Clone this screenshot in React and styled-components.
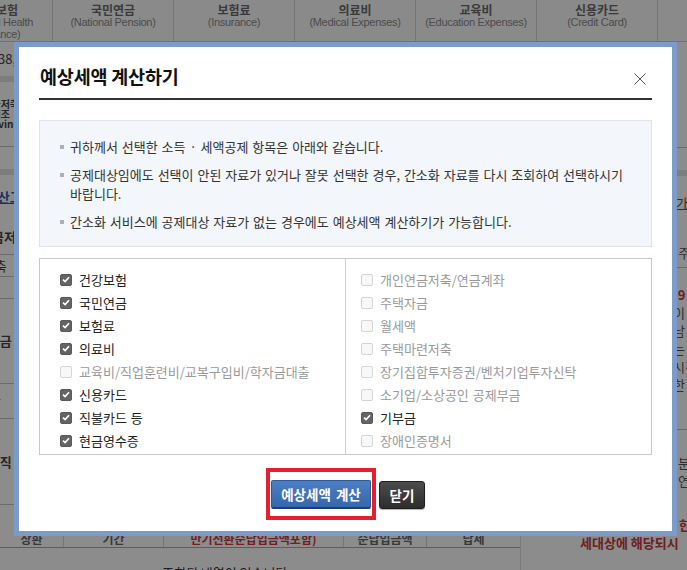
import styled, { createGlobalStyle } from "styled-components";

const GlobalStyle = createGlobalStyle`
  html, body {
    margin: 0;
    padding: 0;
    background: #fff;
  }
  body {
    font-family: "Noto Sans CJK KR", "Noto Sans", sans-serif;
  }
`;

const Screen = styled.div`
  position: relative;
  width: 687px;
  height: 570px;
  overflow: hidden;
`;

/* ---------- page behind the dialog ---------- */

const Page = styled.div`
  display: flex;
  flex-direction: column;
  width: 687px;
  height: 570px;
  overflow: hidden;
  color: #444;
  font-size: 12px;
`;

const HeaderRow = styled.div`
  display: flex;
  flex-shrink: 0;
  height: 42px;
  margin-left: -60px;
  background: #fbfcfe;
  border-bottom: 1px solid #d0d0d0;
  box-sizing: border-box;
`;

const HeaderCell = styled.div`
  flex: 0 0 ${({ $w }) => $w || 121}px;
  box-sizing: border-box;
  border-right: 1px solid #d3d3d3;
  display: flex;
  flex-direction: column;
  align-items: center;
  padding-top: 4px;
  line-height: 12px;
  white-space: nowrap;
  strong {
    font-size: 12px;
    font-weight: 700;
    color: #6a6a6a;
  }
  span {
    font-family: "Liberation Sans", Arial, sans-serif;
    font-size: 11px;
    letter-spacing: -0.3px;
    color: #8a8a8a;
  }
`;

const Main = styled.div`
  flex: 1;
  display: grid;
  grid-template-columns: 521px 1fr;
  min-height: 0;
`;

const LeftCol = styled.div`
  display: flex;
  flex-direction: column;
  overflow: hidden;
  border-right: 1px solid #ddd;
`;

const SideList = styled.div`
  flex: 0 0 462px;
  display: flex;
  flex-direction: column;
  margin-left: -20px;
  overflow: hidden;
`;

const SideRow = styled.div`
  flex: 0 0 ${({ $h }) => $h}px;
  display: flex;
  flex-direction: column;
  justify-content: center;
  box-sizing: border-box;
  background: ${({ $band }) => ($band ? "#e3e3e3" : "transparent")};
  border-bottom: ${({ $line }) => ($line ? "1px solid #c4c4c4" : "none")};
  font-size: ${({ $small }) => ($small ? "10px" : "13px")};
  line-height: ${({ $small }) => ($small ? "10px" : "16px")};
  font-weight: ${({ $bold }) => ($bold ? 700 : 400)};
  color: ${({ $link }) => ($link ? "#2f5a9c" : "#444")};
  text-decoration: ${({ $link }) => ($link ? "underline" : "none")};
  white-space: nowrap;
`;

const BottomTable = styled.div`
  flex: 0 0 44px;
  display: grid;
  grid-template-columns: 64px 100px 180px 83px 94px;
  border-top: 1px solid #c4c4c4;
  border-bottom: 1px solid #aaa;
  box-sizing: border-box;
`;

const BottomHead = styled.div`
  display: flex;
  flex-direction: column;
  justify-content: flex-end;
  align-items: center;
  padding-bottom: 1px;
  border-right: 1px solid #d6d6d6;
  font-size: 12px;
  line-height: 14px;
  font-weight: 700;
  white-space: nowrap;
  color: ${({ $red }) => ($red ? "#c83a3a" : "#666")};
`;

const EmptyRow = styled.div`
  padding-top: 16px;
  padding-left: 162px;
  font-size: 13px;
  line-height: 18px;
  color: #333;
  white-space: nowrap;
`;

const RightCol = styled.div`
  display: flex;
  flex-direction: column;
  overflow: hidden;
  font-size: 13px;
  line-height: 18px;
  white-space: nowrap;
`;

const NoteBlock = styled.div`
  flex: 0 0 ${({ $h }) => $h}px;
  box-sizing: border-box;
  padding-left: ${({ $pad }) => $pad ?? 150}px;
  padding-top: ${({ $top }) => $top || 0}px;
  background: ${({ $band }) => ($band ? "#e3e3e3" : "transparent")};
  border-bottom: ${({ $line }) => ($line ? "1px solid #c4c4c4" : "none")};
  color: ${({ $red }) => ($red ? "#c83a3a" : "#555")};
  font-weight: ${({ $bold }) => ($bold ? 700 : 400)};
  text-decoration: ${({ $link }) => ($link ? "underline" : "none")};
`;

const RedText = styled.span`
  color: #c83a3a;
  font-weight: 700;
`;

const Overlay = styled.div`
  position: absolute;
  inset: 0;
  background: rgba(0, 0, 0, 0.45);
`;

/* ---------- dialog ---------- */

const Modal = styled.div`
  position: absolute;
  left: 14px;
  top: 42px;
  width: 663px;
  height: 494px;
  box-sizing: border-box;
  border: 5px solid #7b9bcb;
  background: #fff;
  padding: 0 20px;
  display: flex;
  flex-direction: column;
  font-family: "Noto Sans CJK KR", "Noto Sans", sans-serif;
`;

const DialogHeader = styled.div`
  display: flex;
  justify-content: space-between;
  align-items: flex-start;
  padding: 17px 0 10px 1px;
  border-bottom: 2px solid #333;
`;

const Title = styled.h2`
  margin: 0;
  font-size: 18.5px;
  line-height: 24px;
  font-weight: 700;
  color: #111;
  letter-spacing: -0.2px;
`;

const CloseButton = styled.button`
  width: 12px;
  height: 12px;
  margin: 9px 6px 0 0;
  padding: 0;
  border: 0;
  background: none;
  cursor: pointer;
  display: flex;
  svg {
    display: block;
  }
`;

const InfoBox = styled.ul`
  list-style: none;
  margin: 20px 0 0;
  padding: 16px 20px 15px;
  background: #f3f6fa;
  border: 1px solid #dfe4ec;
  display: flex;
  flex-direction: column;
  gap: 9px;
`;

const InfoItem = styled.li`
  display: flex;
  gap: 6px;
  font-size: 13px;
  line-height: 19px;
  color: #333;
  word-spacing: 1px;
  white-space: nowrap;
  &::before {
    content: "";
    flex: 0 0 4px;
    height: 4px;
    margin-top: 8px;
    background: #aab0b8;
  }
`;

const CheckPanel = styled.div`
  margin-top: 11px;
  display: grid;
  grid-template-columns: 305px 1fr;
  border: 1px solid #c9c9c9;
`;

const CheckColumn = styled.div`
  display: flex;
  flex-direction: column;
  padding: 9px 0 2px ${({ $pad }) => $pad}px;
  border-left: ${({ $divider }) => ($divider ? "1px solid #d0d0d0" : "none")};
`;

const CheckRow = styled.label`
  display: flex;
  align-items: center;
  gap: 7px;
  height: 23px;
  font-size: 13px;
  color: ${({ $off }) => ($off ? "#9a9a9a" : "#222")};
  word-spacing: 1px;
  white-space: nowrap;
`;

const Box = styled.span`
  flex: 0 0 12px;
  width: 12px;
  height: 12px;
  box-sizing: border-box;
  border-radius: 2px;
  display: flex;
  align-items: center;
  justify-content: center;
  background: ${({ $on }) => ($on ? "#646464" : "#f8f8f8")};
  border: 1px solid ${({ $on }) => ($on ? "#5a5a5a" : "#d6d6d6")};
`;

const Actions = styled.div`
  margin-top: 13px;
  display: flex;
  justify-content: center;
  align-items: center;
  gap: 3px;
`;

const Highlight = styled.div`
  border: 4px solid #e3202b;
  padding: 8px 1px 7px;
  display: flex;
`;

const PrimaryButton = styled.button`
  width: 100px;
  height: 29px;
  box-sizing: border-box;
  padding: 0;
  border: 1px solid #2f5a98;
  border-bottom: 2px solid #1c3e72;
  border-radius: 2px;
  background: linear-gradient(#4d7ec3, #3567ab);
  color: #fff;
  font-family: inherit;
  font-size: 13.5px;
  font-weight: 700;
  word-spacing: 2px;
  cursor: pointer;
`;

const DarkButton = styled.button`
  width: 46px;
  height: 28px;
  margin-top: 2px;
  box-sizing: border-box;
  padding: 0;
  border: 1px solid #1e1e1e;
  border-radius: 3px;
  background: linear-gradient(#4c4c4c, #2d2d2d);
  box-shadow: 0 1px 1px rgba(0, 0, 0, 0.3);
  color: #fff;
  font-family: inherit;
  font-size: 13.5px;
  font-weight: 700;
  cursor: pointer;
`;

const headers = [
  ["건강보험", "(National Health", "Insurance)"],
  ["국민연금", "(National Pension)"],
  ["보험료", "(Insurance)"],
  ["의료비", "(Medical Expenses)"],
  ["교육비", "(Education Expenses)"],
  ["신용카드", "(Credit Card)"],
  ["직불카드", "(Debit Card)"],
];

const leftItems = [
  { label: "건강보험", on: true },
  { label: "국민연금", on: true },
  { label: "보험료", on: true },
  { label: "의료비", on: true },
  { label: "교육비/직업훈련비/교복구입비/학자금대출", on: false },
  { label: "신용카드", on: true },
  { label: "직불카드 등", on: true },
  { label: "현금영수증", on: true },
];

const rightItems = [
  { label: "개인연금저축/연금계좌", on: false },
  { label: "주택자금", on: false },
  { label: "월세액", on: false },
  { label: "주택마련저축", on: false },
  { label: "장기집합투자증권/벤처기업투자신탁", on: false },
  { label: "소기업/소상공인 공제부금", on: false },
  { label: "기부금", on: true },
  { label: "장애인증명서", on: false },
];

function Check({ on }) {
  return (
    <Box $on={on}>
      {on && (
        <svg width="8" height="7" viewBox="0 0 8 7">
          <path d="M1 3.6 L3.1 5.6 L7 1.2" fill="none" stroke="#fff" strokeWidth="1.6" />
        </svg>
      )}
    </Box>
  );
}

function CheckList({ items, pad, divider }) {
  return (
    <CheckColumn $pad={pad} $divider={divider}>
      {items.map((it) => (
        <CheckRow key={it.label} $off={!it.on}>
          <Check on={it.on} />
          {it.label}
        </CheckRow>
      ))}
    </CheckColumn>
  );
}

function Background() {
  return (
    <Page>
      <HeaderRow>
        {headers.map(([ko, ...en], i) => (
          <HeaderCell key={ko} $w={i === 0 ? 113 : 121}>
            <strong>{ko}</strong>
            {en.map((t) => (
              <span key={t}>{t}</span>
            ))}
          </HeaderCell>
        ))}
      </HeaderRow>
      <Main>
        <LeftCol>
          <SideList>
            <SideRow $h={34}>2,038,000</SideRow>
            <SideRow $h={6} $band />
            <SideRow $h={65} $small $bold $line>
              <div>&nbsp;연금저축</div>
              <div>&nbsp;세제조</div>
              <div>&nbsp;(Savings</div>
            </SideRow>
            <SideRow $h={22} />
            <SideRow $h={6} $band />
            <SideRow $h={44} $link $bold>
              &nbsp;&nbsp;계산고
            </SideRow>
            <SideRow $h={36} $bold $line>
              연금저축
            </SideRow>
            <SideRow $h={22} $line>
              &nbsp;저축
            </SideRow>
            <SideRow $h={22} $line />
            <SideRow $h={85} $bold $line>
              &nbsp;-연금
            </SideRow>
            <SideRow $h={35} $line>
              &nbsp;&nbsp;&nbsp;상
            </SideRow>
            <SideRow $h={85} $bold>
              &nbsp;-퇴직
            </SideRow>
          </SideList>
          <BottomTable>
            <BottomHead>
              <div>&nbsp;</div>
              <div>상환</div>
            </BottomHead>
            <BottomHead>
              <div>납입</div>
              <div>기간</div>
            </BottomHead>
            <BottomHead $red>
              <div>연금계좌 납입금액</div>
              <div>만기전환순납입금액포함)</div>
            </BottomHead>
            <BottomHead>
              <div>연금저축</div>
              <div>순납입금액</div>
            </BottomHead>
            <BottomHead>
              <div>비고</div>
              <div>납세</div>
            </BottomHead>
          </BottomTable>
          <EmptyRow>조회된 내역이 없습니다.</EmptyRow>
        </LeftCol>
        <RightCol>
          <NoteBlock $h={106} $line />
          <NoteBlock $h={22} />
          <NoteBlock $h={6} $band />
          <NoteBlock $h={50} $link $pad={155} $top={18}>
            가
          </NoteBlock>
          <NoteBlock $h={42} $line $pad={153} $top={18}>
            !주
          </NoteBlock>
          <NoteBlock $h={162} $line $pad={152} $top={18}>
            <RedText>!9</RedText>
            <br />이
            <br />남
            <br />는
            <br />시진
            <br />한
          </NoteBlock>
          <NoteBlock $h={86} $pad={157} $top={24}>
            분
            <br />연
          </NoteBlock>
          <NoteBlock $h={16} $red $bold $pad={158}>
            한
          </NoteBlock>
          <NoteBlock $h={20} $red $bold $pad={59}>
            세대상에 해당되시
          </NoteBlock>
        </RightCol>
      </Main>
    </Page>
  );
}

export default function App() {
  return (
    <Screen>
      <GlobalStyle />
      <Background />
      <Overlay />
      <Modal role="dialog" aria-label="예상세액 계산하기">
        <DialogHeader>
          <Title>예상세액 계산하기</Title>
          <CloseButton aria-label="닫기">
            <svg width="12" height="12" viewBox="0 0 12 12">
              <path d="M0.5 0.5 L11.5 11.5 M11.5 0.5 L0.5 11.5" stroke="#555" strokeWidth="1" />
            </svg>
          </CloseButton>
        </DialogHeader>
        <InfoBox>
          <InfoItem>귀하께서 선택한 소득 · 세액공제 항목은 아래와 같습니다.</InfoItem>
          <InfoItem>
            <span>
              공제대상임에도 선택이 안된 자료가 있거나 잘못 선택한 경우, 간소화 자료를 다시 조회하여 선택하시기
              <br />
              바랍니다.
            </span>
          </InfoItem>
          <InfoItem>간소화 서비스에 공제대상 자료가 없는 경우에도 예상세액 계산하기가 가능합니다.</InfoItem>
        </InfoBox>
        <CheckPanel>
          <CheckList items={leftItems} pad={20} />
          <CheckList items={rightItems} pad={15} divider />
        </CheckPanel>
        <Actions>
          <Highlight>
            <PrimaryButton>예상세액 계산</PrimaryButton>
          </Highlight>
          <DarkButton>닫기</DarkButton>
        </Actions>
      </Modal>
    </Screen>
  );
}
